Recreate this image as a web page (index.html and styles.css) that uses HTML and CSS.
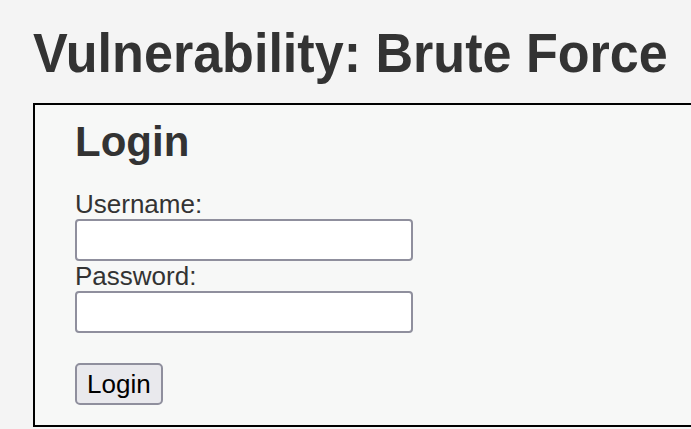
FILE: index.html
```html
<!DOCTYPE html>
<html>
<head>
<meta charset="utf-8">
<link rel="stylesheet" href="styles.css">
</head>
<body>
<div class="page">
  <h1 class="title">Vulnerability: Brute Force</h1>
  <div class="vulnerable_code_area">
    <form class="login-form" action="#" method="GET">
      <h2 class="form-title">Login</h2>
      <label class="field-label" for="username">Username:</label>
      <input class="text-input" type="text" id="username" name="username">
      <label class="field-label" for="password">Password:</label>
      <input class="text-input" type="password" id="password" name="password">
      <div class="actions">
        <button class="submit-btn" type="button">Login</button>
      </div>
    </form>
  </div>
</div>
</body>
</html>
```
FILE: styles.css
```css
html, body {
  margin: 0;
  padding: 0;
  background: #f4f4f4;
}
body {
  font-family: "Liberation Sans", Arial, sans-serif;
  color: #333;
}
.page {
  padding: 21px 0 0 33px;
  overflow: hidden;
}
.title {
  margin: 0;
  font-size: 55px;
  line-height: 64px;
  font-weight: bold;
  color: #333;
  white-space: nowrap;
  transform: scaleX(0.947);
  transform-origin: left center;
}
.vulnerable_code_area {
  margin-top: 18px;
  border: 2px solid #000;
  border-right: none;
  background: #f7f8f7;
  padding: 12px 0 20px 40px;
  height: 288px;
}
.login-form {
  display: flex;
  flex-direction: column;
  align-items: flex-start;
}
.form-title {
  margin: 0 0 22px 0;
  font-size: 42px;
  line-height: 50px;
  font-weight: bold;
  color: #333;
}
.field-label {
  font-size: 26px;
  line-height: 30px;
  color: #333;
}
.text-input {
  box-sizing: border-box;
  width: 338px;
  height: 42px;
  margin: 0;
  border: 2px solid #8f8f9d;
  border-radius: 4px;
  background: #fff;
}
.actions {
  margin-top: 30px;
}
.submit-btn {
  box-sizing: border-box;
  height: 42px;
  padding: 0 10px;
  border: 2px solid #8f8f9d;
  border-radius: 5px;
  background: #e9e9ed;
  font-family: "Liberation Sans", Arial, sans-serif;
  font-size: 26px;
  color: #000;
}
```
